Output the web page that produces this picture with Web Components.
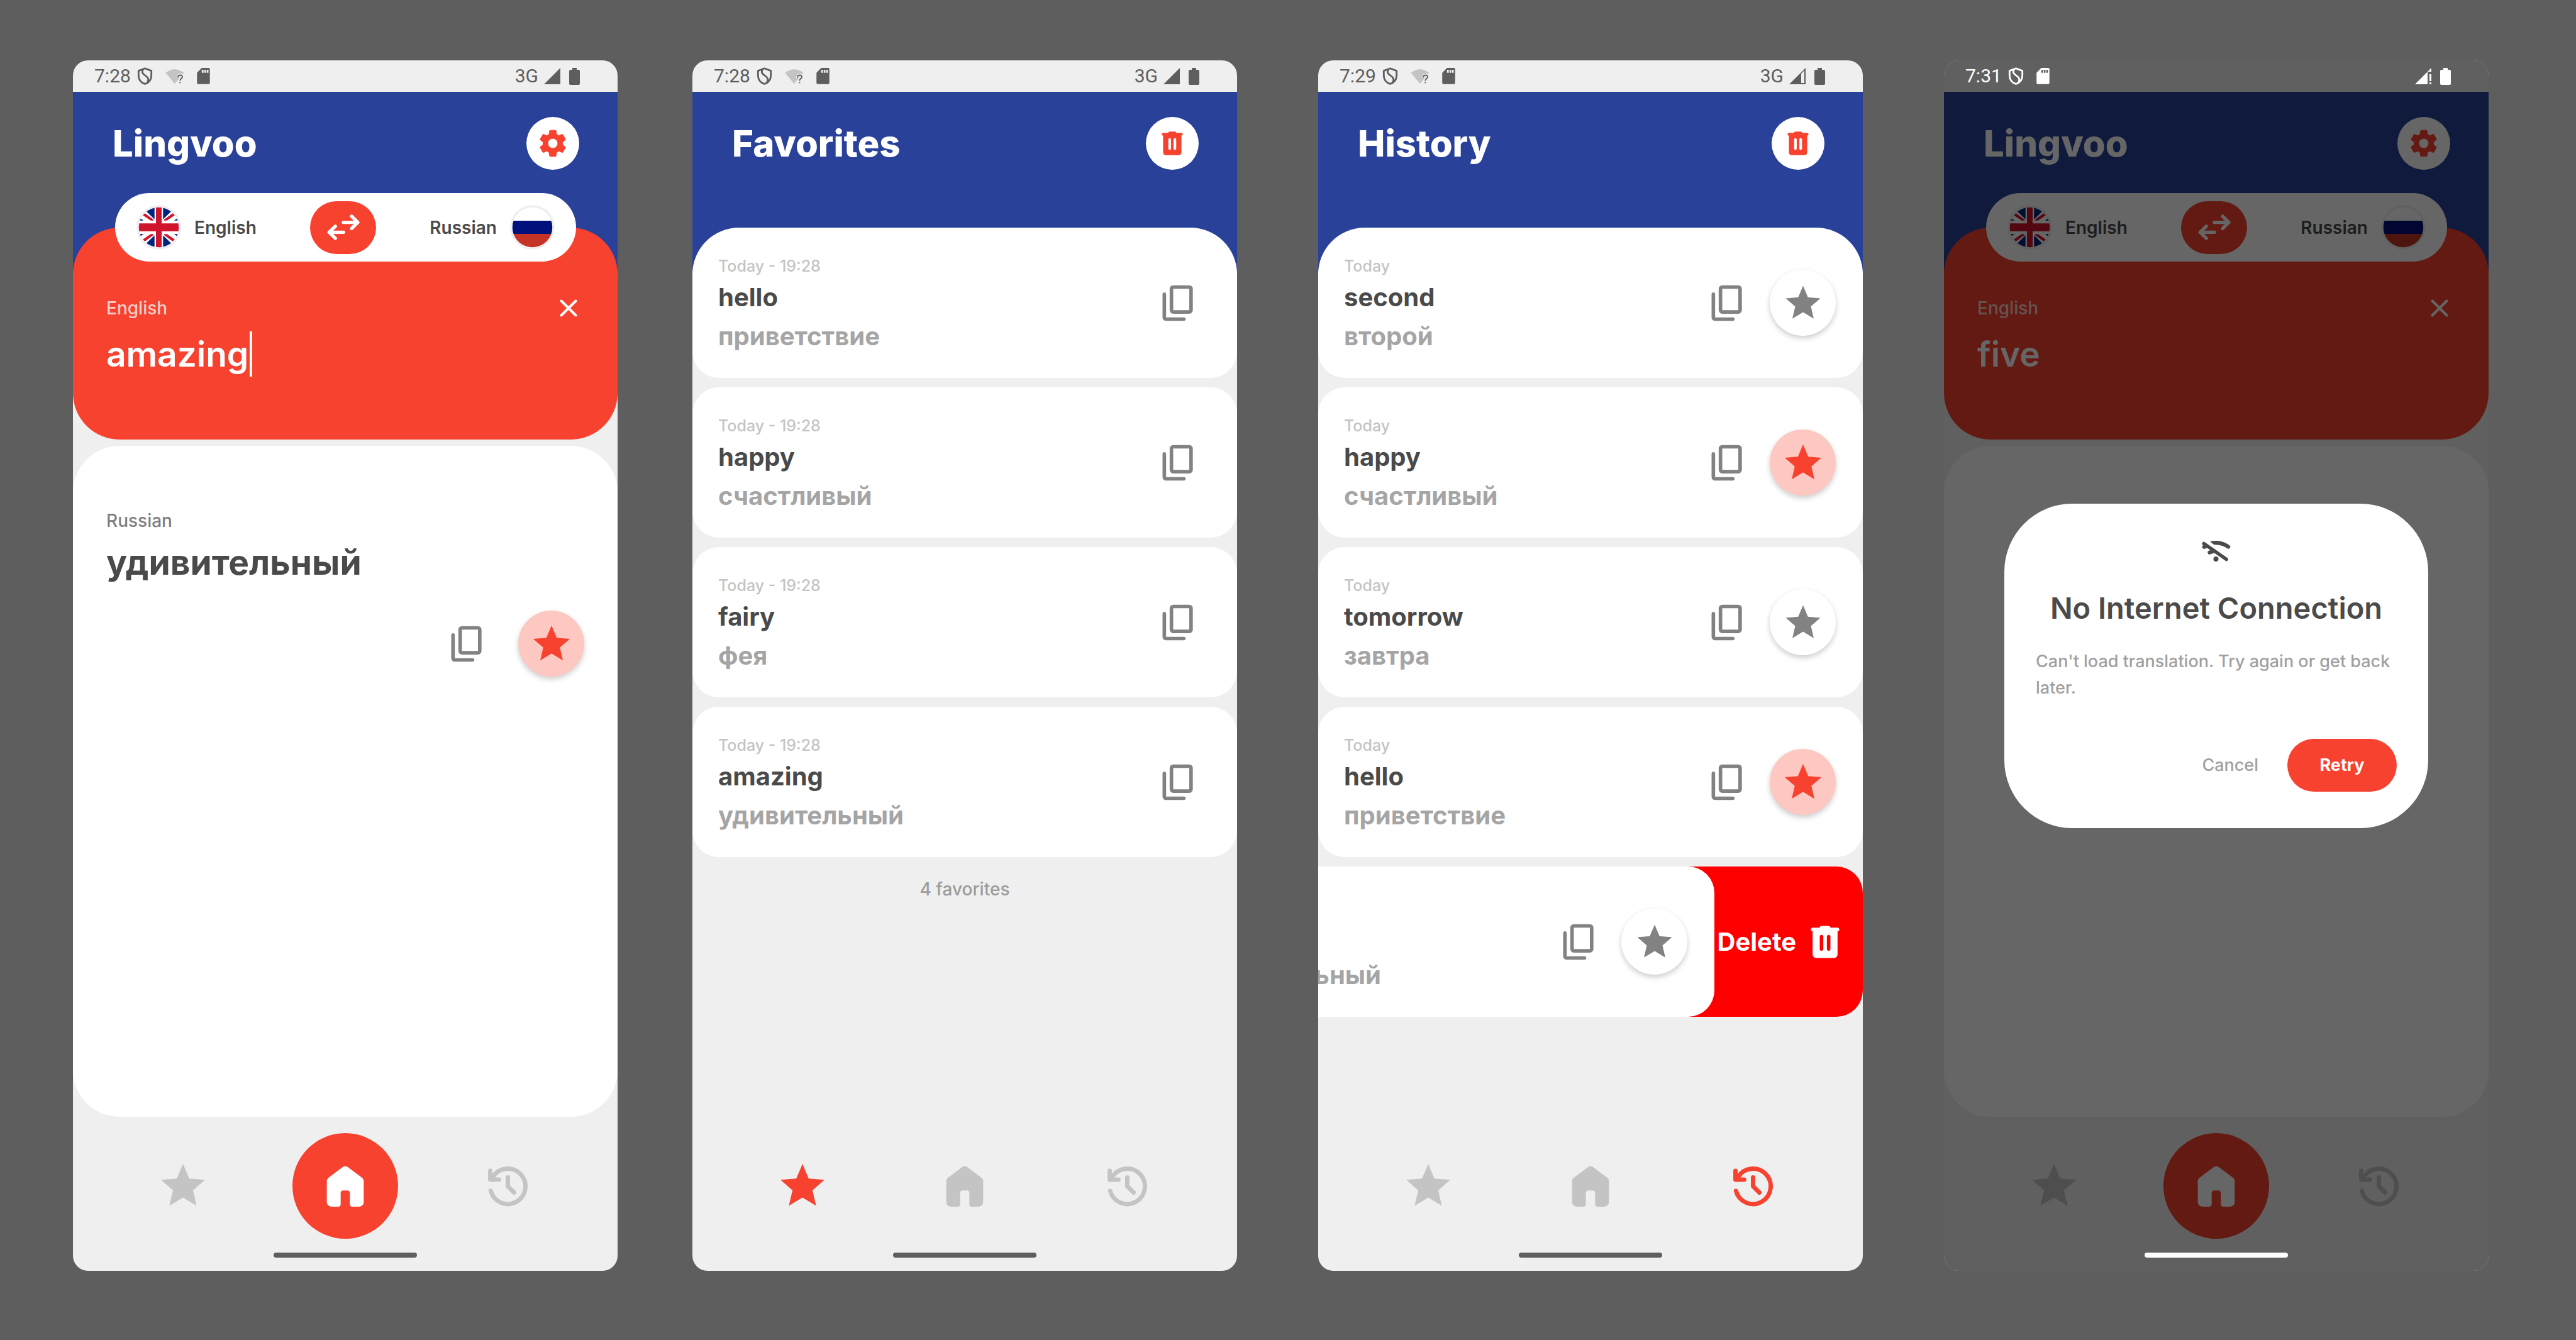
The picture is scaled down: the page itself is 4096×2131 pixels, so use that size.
<!DOCTYPE html>
<html lang="en">
<head>
<meta charset="utf-8">
<title>Lingvoo</title>
<style>
  :root {
    --page: #5e5e5e;
    --surface: #efefef;
    --blue: #294199;
    --red: #f7422f;
    --pink: #fec8c2;
    --ink: #4a4a4a;
    --grey: #828282;
    --soft: #a5a5a5;
    --faint: #c4c4c4;
  }
  body {
    margin: 0;
    box-sizing: border-box;
    min-height: 100vh;
    padding: 96px 139px 110px 116px;
    display: flex;
    gap: 119px;
    background: var(--page);
    font-family: Inter, "Open Sans", sans-serif;
    font-weight: 500;
    color: var(--ink);
  }
  lv-phone { flex: 1 1 0; min-width: 0; }
  lv-phone:nth-of-type(n+3) { margin-left: 10px; }
  .count { margin: 0; padding-top: 16px; text-align: center; font-size: 28px; line-height: 40px; color: #9c9c9c; }
</style>
</head>
<body>

<lv-phone time="7:28" network="3G" wifi tab="home">
  <lv-header heading="Lingvoo" action="settings" label="Settings"><lv-languages></lv-languages></lv-header>
  <lv-translator source="amazing" result="удивительный" focused></lv-translator>
</lv-phone>

<lv-phone time="7:28" network="3G" wifi tab="favorites">
  <lv-header heading="Favorites" action="trash" label="Clear favorites"></lv-header>
  <lv-list>
    <lv-entry when="Today - 19:28" word="hello" translation="приветствие"></lv-entry>
    <lv-entry when="Today - 19:28" word="happy" translation="счастливый"></lv-entry>
    <lv-entry when="Today - 19:28" word="fairy" translation="фея"></lv-entry>
    <lv-entry when="Today - 19:28" word="amazing" translation="удивительный"></lv-entry>
    <p class="count">4 favorites</p>
  </lv-list>
</lv-phone>

<lv-phone time="7:29" network="3G" wifi signal="signal-low" tab="history">
  <lv-header heading="History" action="trash" label="Clear history"></lv-header>
  <lv-list>
    <lv-entry when="Today" word="second" translation="второй" star="off"></lv-entry>
    <lv-entry when="Today" word="happy" translation="счастливый" star="on"></lv-entry>
    <lv-entry when="Today" word="tomorrow" translation="завтра" star="off"></lv-entry>
    <lv-entry when="Today" word="hello" translation="приветствие" star="on"></lv-entry>
    <lv-entry word="" translation="удивительный" star="off" swiped></lv-entry>
  </lv-list>
</lv-phone>

<lv-phone time="7:31" signal="signal-error" tab="home" dimmed>
  <lv-header heading="Lingvoo" action="settings" label="Settings"><lv-languages></lv-languages></lv-header>
  <lv-translator source="five"></lv-translator>
  <lv-dialog slot="overlay" heading="No Internet Connection">Can't load translation. Try again or get back later.</lv-dialog>
</lv-phone>

<script>
const STAR = '<path fill="currentColor" d="M12 17.27L18.18 21l-1.64-7.03L22 9.24l-7.19-.61L12 2 9.19 8.63 2 9.24l5.46 4.73L5.82 21z"/>';

const FLAG_QUARTER = '<path fill="#00247d" d="M88 131L100 99H146V187ZM40 182H60L78 195H40Z"/><path fill="#cf142b" d="M72 161L87 150L140 189V195H122Z"/>';

// name: [viewBox, width / height ratio, markup]
const ICONS = {
  star: ['0 0 24 24', 1, STAR],
  home: ['0 -960 960 960', 1, '<path fill="currentColor" d="M160-200v-360q0-19 8.500-36t23.500-28l240-180q21-16 48-16t48 16l240 180q15 11 23.500 28t8.500 36v360q0 33-23.500 56.500T720-120H600q-17 0-28.500-11.500T560-160v-200q0-17-11.500-28.500T520-400h-80q-17 0-28.500 11.500T400-360v200q0 17-11.500 28.500T360-120H240q-33 0-56.500-23.500T160-200Z"/>'],
  history: ['236 173 300 300', 1, '<g fill="none" stroke="currentColor" stroke-width="27" stroke-linecap="round" stroke-linejoin="round"><path d="M280 352A109.500 109.500 0 1 0 292 267L281 279"/><path d="M277 227V282H331M386 268V323L425 362"/></g>'],
  copy: ['0 -960 960 960', 1, '<path fill="currentColor" d="M360-240q-33 0-56.500-23.500T280-320v-480q0-33 23.500-56.500T360-880h360q33 0 56.500 23.500T800-800v480q0 33-23.500 56.500T720-240H360Zm0-80h360v-480H360v480ZM200-80q-33 0-56.500-23.500T120-160v-520q0-17 11.500-28.500T160-720q17 0 28.500 11.500T200-680v520h400q17 0 28.500 11.500T640-120q0 17-11.500 28.500T600-80H200Z"/>'],
  trash: ['0 -960 960 960', 1, '<path fill="currentColor" fill-rule="evenodd" d="M280-120q-33 0-56.500-23.500T200-200v-520q-17 0-28.500-11.500T160-760q0-17 11.500-28.500T200-800h160q0-17 11.500-28.500T400-840h160q17 0 28.500 11.500T600-800h160q17 0 28.500 11.500T800-760q0 17-11.500 28.500T760-720v520q0 33-23.500 56.500T680-120H280Zm120-160q17 0 28.500-11.500T440-320v-280q0-17-11.500-28.500T400-640q-17 0-28.500 11.500T360-600v280q0 17 11.500 28.500T400-280Zm160 0q17 0 28.500-11.500T600-320v-280q0-17-11.500-28.500T560-640q-17 0-28.500 11.500T520-600v280q0 17 11.500 28.500T560-280Z"/>'],
  settings: ['0 0 24 24', 1, '<path fill="currentColor" d="M19.140 12.940c.04-.3.06-.61.06-.94 0-.32-.02-.64-.07-.94l2.030-1.580c.18-.14.23-.41.12-.61l-1.920-3.320c-.12-.22-.37-.29-.59-.22l-2.390.96c-.5-.38-1.030-.7-1.620-.94L14.400 2.810c-.04-.24-.24-.41-.48-.41h-3.840c-.24 0-.43.17-.47.41L9.250 5.350C8.660 5.590 8.120 5.920 7.630 6.290L5.240 5.330c-.22-.08-.47 0-.59.22L2.740 8.870c-.12.21-.08.47.12.61l2.030 1.580c-.05.3-.09.63-.09.94s.02.64.07.94l-2.030 1.580c-.18.14-.23.41-.12.61l1.920 3.320c.12.22.37.29.59.22l2.390-.96c.5.38 1.030.7 1.620.94l.36 2.540c.05.24.24.41.48.41h3.840c.24 0 .44-.17.47-.41l.36-2.540c.59-.24 1.130-.56 1.620-.94l2.390.96c.22.08.47 0 .59-.22l1.920-3.320c.12-.22.07-.47-.12-.61L19.140 12.940zM12 15.600c-1.980 0-3.600-1.620-3.600-3.600s1.620-3.600 3.600-3.600 3.600 1.620 3.600 3.600-1.620 3.600-3.600 3.600z" stroke="currentColor" stroke-width=".4" stroke-linejoin="round"/>'],
  close: ['0 0 28 28', 1, '<path d="M2.500 2.500L25.500 25.500M25.500 2.500L2.500 25.500" stroke="currentColor" stroke-width="4" stroke-linecap="round"/>'],
  swap: ['1210 150 210 175', 1.2, '<g fill="none" stroke="currentColor" stroke-width="21" stroke-linecap="round" stroke-linejoin="round"><path d="M1315 207H1404M1366 169L1404 207L1366 245"/><path d="M1316 268H1227M1265 231L1227 268L1265 305"/></g>'],
  'wifi-off': ['130 95 190 145', 1.31, '<g fill="none" stroke="currentColor" stroke-linecap="round"><path stroke-width="22" d="M147 120L289 219"/><path stroke-width="24" d="M148 141L164 135M183 176L208 168"/></g><path fill="currentColor" d="M186 107C225 97 272 103 308 131A11 11 0 0 1 294 150C270 133 240 125 211 127Z"/><circle fill="currentColor" cx="223" cy="217" r="16"/>'],
  shield: ['312 52 98 116', 0.845, '<g fill="none" stroke="currentColor" stroke-width="11" stroke-linejoin="round"><path d="M361 62L401 77V105C401 132 385 151 361 159C337 151 321 132 321 105V77Z"/><path d="M350 67C342 80 343 91 353 99L371 113C383 122 385 134 377 149"/></g>'],
  wifi: ['482 60 120 100', 1.2, '<path fill="#c4c4c4" d="M483 87Q541 42 600 87L541 157Z"/><g fill="none" stroke-linecap="butt"><path stroke="#efefef" stroke-width="18" d="M562 119C562 98 590 98 590 113C590 124 575 124 575 139V156"/><path stroke="#5e5e5e" stroke-width="8" d="M562 117C562 98 590 98 590 113C590 124 575 124 575 138M575 145V153"/></g>'],
  sd: ['680 60 83 102', 0.81, '<path fill="currentColor" fill-rule="evenodd" d="M711 60H754Q762 60 762 68V153Q762 161 754 161H689Q681 161 681 153V90ZM711 71V90H722V71ZM727 71V90H737V71ZM742 71V90H753V71Z"/>'],
  signal: ['0 0 26 26', 1, '<path fill="currentColor" d="M0 26L26 0V26Z"/>'],
  'signal-low': ['0 0 26 26', 1, '<path fill="currentColor" fill-rule="evenodd" d="M0 26L26 0V26ZM19 9V24H24V4Z"/>'],
  'signal-error': ['0 0 26 26', 1, '<path fill="currentColor" d="M0 26L26 0V6H20V26ZM23 10H26V21H23ZM23 23H26V26H23Z"/>'],
  battery: ['0 0 17 27', 0.63, '<path fill="currentColor" d="M5 0H12V3H15Q17 3 17 5V25Q17 27 15 27H2Q0 27 0 25V5Q0 3 2 3H5Z"/>'],
  uk: ['34 99 277 276', 1, `<defs><clipPath id="c"><circle cx="172.500" cy="237" r="124"/></clipPath></defs><circle cx="172.500" cy="237" r="138" fill="#efefef"/><g clip-path="url(#c)"><path fill="#fff" d="M34 99H311V375H34Z"/><g>${FLAG_QUARTER}</g><g transform="matrix(-1 0 0 1 345 0)">${FLAG_QUARTER}</g><g transform="matrix(1 0 0 -1 0 474)">${FLAG_QUARTER}</g><g transform="matrix(-1 0 0 -1 345 474)">${FLAG_QUARTER}</g><path fill="#cf142b" d="M155 99H190V213H311V261H190V375H155V261H34V213H155Z"/></g>`],
  ru: ['34 99 277 276', 1, '<defs><clipPath id="c"><circle cx="172.500" cy="237" r="124"/></clipPath></defs><circle cx="172.500" cy="237" r="138" fill="#efefef"/><g clip-path="url(#c)"><path fill="#fff" d="M34 99H311V196H34Z"/><path fill="#00107a" d="M34 196H311V278H34Z"/><path fill="#c43325" d="M34 278H311V375H34Z"/></g>']
};

class LvElement extends HTMLElement {
  connectedCallback() {
    if (this.shadowRoot) return;
    this.attachShadow({ mode: 'open' }).innerHTML =
      `<style>
        *, :host { box-sizing: border-box; }
        button { border: 0; padding: 0; margin: 0; background: none; font: inherit; color: inherit; cursor: pointer; display: flex; align-items: center; justify-content: center; }
        ${this.css()}
      </style>${this.html()}`;
  }
  get(name) { return this.getAttribute(name) || ''; }
}

customElements.define('lv-icon', class extends LvElement {
  css() { return ':host { display: block; flex: none; } svg { display: block; }'; }
  html() {
    const [box, ratio, markup] = ICONS[this.get('name')];
    const height = Number(this.get('size'));
    return `<svg viewBox="${box}" width="${Math.round(height * ratio)}" height="${height}" aria-hidden="true">${markup}</svg>`;
  }
});

customElements.define('lv-status', class extends LvElement {
  css() {
    return `
      :host { display: flex; align-items: center; justify-content: space-between; height: 50px; padding: 0 60px 0 34px;
        font: 400 30px/36px Roboto, sans-serif; color: #5e5e5e; position: relative; z-index: 3; }
      :host([light]) { color: #fff; }
      div { display: flex; align-items: center; }
      .left { gap: 20px; }
      .clock { display: flex; align-items: center; gap: 10px; }
      .right { gap: 9px; }
      .right lv-icon:last-child { margin-left: 5px; }`;
  }
  html() {
    return `
      <div class="left"><span class="clock"><time>${this.get('time')}</time><lv-icon name="shield" size="30"></lv-icon></span>
        ${this.hasAttribute('wifi') ? '<lv-icon name="wifi" size="25"></lv-icon>' : ''}
        <lv-icon name="sd" size="26"></lv-icon></div>
      <div class="right">${this.get('network') ? `<span>${this.get('network')}</span>` : ''}
        <lv-icon name="${this.get('signal') || 'signal'}" size="26"></lv-icon>
        <lv-icon name="battery" size="27"></lv-icon></div>`;
  }
});

customElements.define('lv-nav', class extends LvElement {
  css() {
    return `
      :host { display: block; }
      nav { display: grid; grid-template-columns: repeat(3, 1fr); justify-items: center; padding: 26px 46px 0; color: var(--faint); }
      a { display: flex; align-items: center; justify-content: center; width: 168px; height: 168px; border-radius: 50%; color: inherit; text-decoration: none; }
      a[aria-current] { color: var(--red); }
      a.home[aria-current] { background: var(--red); color: #fff; }`;
  }
  html() {
    const tab = this.get('tab');
    return '<nav aria-label="Main">' + [['favorites', 'star', 84], ['home', 'home', 88], ['history', 'history', 77]].map(([id, icon, size]) =>
      `<a href="#${id}" class="${id}" aria-label="${id}" ${tab === id ? 'aria-current="page"' : ''}><lv-icon name="${icon}" size="${size}"></lv-icon></a>`).join('') + '</nav>';
  }
});

customElements.define('lv-phone', class extends LvElement {
  css() {
    return `
      :host { display: flex; flex-direction: column; position: relative; isolation: isolate; overflow: hidden; border-radius: 24px; background: var(--surface); }
      main { flex: 1; display: flex; flex-direction: column; }
      .handle { position: relative; z-index: 3; align-self: center; width: 228px; height: 8px; margin: 22px 0 21px; border-radius: 4px; background: #5e5e5e; }
      :host([dimmed]) .handle { background: #fff; }`;
  }
  html() {
    const dim = this.hasAttribute('dimmed');
    return `
      <lv-status time="${this.get('time')}" network="${this.get('network')}" signal="${this.get('signal')}" ${this.hasAttribute('wifi') ? 'wifi' : ''} ${dim ? 'light' : ''}></lv-status>
      <main><slot></slot></main>
      <lv-nav tab="${this.get('tab')}"></lv-nav>
      <div class="handle"></div>
      <slot name="overlay"></slot>`;
  }
});

customElements.define('lv-header', class extends LvElement {
  css() {
    return `
      :host { display: flex; flex-direction: column; gap: 37px; height: 286px; padding: 40px 61px 0 63px; background: var(--blue); color: #fff; }
      .bar { display: flex; align-items: center; justify-content: space-between; }
      h1 { margin: 0; font-size: 58px; line-height: 84px; font-weight: 800; }
      button { width: 84px; height: 84px; border-radius: 50%; background: #fff; color: var(--red); }`;
  }
  html() {
    const action = this.get('action');
    return `
      <div class="bar"><h1>${this.get('heading')}</h1>
        <button aria-label="${this.get('label')}"><lv-icon name="${action}" size="${action === 'trash' ? 50 : 52}"></lv-icon></button></div>
      <slot></slot>`;
  }
});

customElements.define('lv-languages', class extends LvElement {
  css() {
    return `
      :host { display: flex; align-items: center; justify-content: space-between; height: 109px; margin: 0 5px 0 4px; padding: 0 34px;
        border-radius: 55px; background: #fff; color: var(--ink); position: relative; z-index: 1; font-size: 28px; line-height: 36px; font-weight: 600; }
      .language { gap: 21px; }
      .swap { width: 105px; height: 84px; border-radius: 42px; background: var(--red); color: #fff; }`;
  }
  html() {
    return `
      <button class="language"><lv-icon name="uk" size="71"></lv-icon>English</button>
      <button class="swap" aria-label="Swap languages"><lv-icon name="swap" size="45"></lv-icon></button>
      <button class="language">Russian<lv-icon name="ru" size="71"></lv-icon></button>`;
  }
});

customElements.define('lv-star', class extends LvElement {
  css() {
    return `
      :host { display: block; flex: none; }
      button { width: 105px; height: 105px; border-radius: 50%; background: #fff; color: var(--grey); box-shadow: 0 4px 9px rgba(0, 0, 0, .2); }
      :host([on]) button { background: var(--pink); color: var(--red); }`;
  }
  html() {
    return `<button aria-label="Favorite"><lv-icon name="star" size="${this.hasAttribute('on') ? 70 : 66}"></lv-icon></button>`;
  }
});

customElements.define('lv-translator', class extends LvElement {
  css() {
    return `
      :host { flex: 1; display: flex; flex-direction: column; gap: 10px; margin-top: -70px; }
      section { border-radius: 74px; padding-left: 53px; }
      .label { font-size: 28px; line-height: 40px; }
      .source { background: var(--red); color: #fff; padding-top: 108px; padding-bottom: 100px; }
      .source .label { color: rgba(255, 255, 255, .75); }
      .row { display: flex; align-items: center; justify-content: space-between; padding-right: 64px; }
      .field { display: flex; margin-top: 17px; gap: 2px; }
      input { field-sizing: content; border: 0; padding: 0; margin: 0; background: none; outline: 0; height: 72px; min-width: 0; max-width: 700px; color: inherit; }
      input, output { font-family: inherit; font-size: 55px; line-height: 72px; font-weight: 600; }
      .caret { width: 4px; height: 72px; background: #fff; }
      .result { flex: 1; background: #fff; padding-top: 99px; }
      .result .label { color: #7f7f7f; }
      output { display: block; margin-top: 10px; font-weight: 700; }
      .actions { display: flex; align-items: center; justify-content: flex-end; gap: 47px; margin-top: 41px; padding-right: 53px; color: var(--grey); }`;
  }
  html() {
    const result = this.get('result');
    return `
      <section class="source">
        <div class="row"><label class="label" for="source">English</label><button aria-label="Clear"><lv-icon name="close" size="28"></lv-icon></button></div>
        <div class="field"><input id="source" type="text" value="${this.get('source')}">${this.hasAttribute('focused') ? '<span class="caret"></span>' : ''}</div>
      </section>
      <section class="result">${result ? `
        <span class="label">Russian</span>
        <output for="source">${result}</output>
        <div class="actions"><button aria-label="Copy"><lv-icon name="copy" size="68"></lv-icon></button><lv-star on></lv-star></div>` : ''}
      </section>`;
  }
});

customElements.define('lv-list', class extends LvElement {
  css() {
    return `
      :host { display: flex; flex-direction: column; gap: 15px; margin-top: -70px; }
      ::slotted(lv-entry:first-child) { --top: 74px; }`;
  }
  html() { return '<slot></slot>'; }
});

customElements.define('lv-entry', class extends LvElement {
  css() {
    return `
      :host { display: flex; overflow: hidden; }
      article { flex: 0 0 100%; display: flex; align-items: center; justify-content: space-between; height: 239px;
        padding: 0 59px 0 41px; border-radius: var(--top, 42px) var(--top, 42px) 42px 42px; background: #fff; color: var(--grey); }
      :host([star]) article { padding-right: 43px; }
      .text { display: flex; flex-direction: column; padding-top: 7px; }
      .text > * { margin: 0; white-space: nowrap; }
      time { font-size: 25px; line-height: 38px; color: var(--faint); }
      h2, p { font-size: 40px; line-height: 62px; min-height: 62px; font-weight: 700; }
      h2 { color: var(--ink); }
      p { color: var(--soft); }
      .actions { display: flex; align-items: center; gap: 33px; }
      :host([swiped]) { background: #f00; border-radius: 0 42px 42px 0; }
      :host([swiped]) article { margin-left: -236px; border-radius: 0 42px 42px 0; }
      :host([swiped]) .text { padding-top: 45px; }
      .delete { flex: 0 0 236px; gap: 12px; padding: 0 26px 0 0; justify-content: flex-end; color: #fff; font-size: 40px; line-height: 48px; font-weight: 700; }`;
  }
  html() {
    const star = this.get('star');
    const when = this.get('when');
    return `
      <article>
        <div class="text">${when ? `<time>${when}</time>` : ''}<h2>${this.get('word')}</h2><p>${this.get('translation')}</p></div>
        <div class="actions"><button aria-label="Copy"><lv-icon name="copy" size="68"></lv-icon></button>
          ${star ? `<lv-star ${star === 'on' ? 'on' : ''}></lv-star>` : ''}</div>
      </article>
      ${this.hasAttribute('swiped') ? '<button class="delete">Delete<lv-icon name="trash" size="68"></lv-icon></button>' : ''}`;
  }
});

customElements.define('lv-dialog', class extends LvElement {
  css() {
    return `
      :host { position: absolute; inset: 0; z-index: 2; display: flex; align-items: center; justify-content: center; padding: 0 96px; background: rgba(0, 0, 0, .6); }
      .box { flex: 1; display: flex; flex-direction: column; padding: 51px 50px 58px; border-radius: 108px; background: #fff; }
      .sign { display: flex; align-items: center; justify-content: center; height: 50px; margin-bottom: 35px; }
      h2 { margin: 0 0 34px; text-align: center; white-space: nowrap; font-size: 47px; line-height: 60px; font-weight: 600; }
      p { margin: 0 0 60px; font-size: 27px; line-height: 42px; color: #a0a0a0; }
      .buttons { display: flex; justify-content: flex-end; gap: 46px; font-size: 27px; line-height: 36px; color: #a0a0a0; }
      .retry { width: 174px; height: 84px; border-radius: 42px; background: var(--red); color: #fff; font-weight: 700; }`;
  }
  html() {
    return `
      <div class="box" role="dialog" aria-labelledby="title">
        <div class="sign"><lv-icon name="wifi-off" size="37"></lv-icon></div>
        <h2 id="title">${this.get('heading')}</h2>
        <p><slot></slot></p>
        <div class="buttons"><button>Cancel</button><button class="retry">Retry</button></div>
      </div>`;
  }
});
</script>
</body>
</html>
